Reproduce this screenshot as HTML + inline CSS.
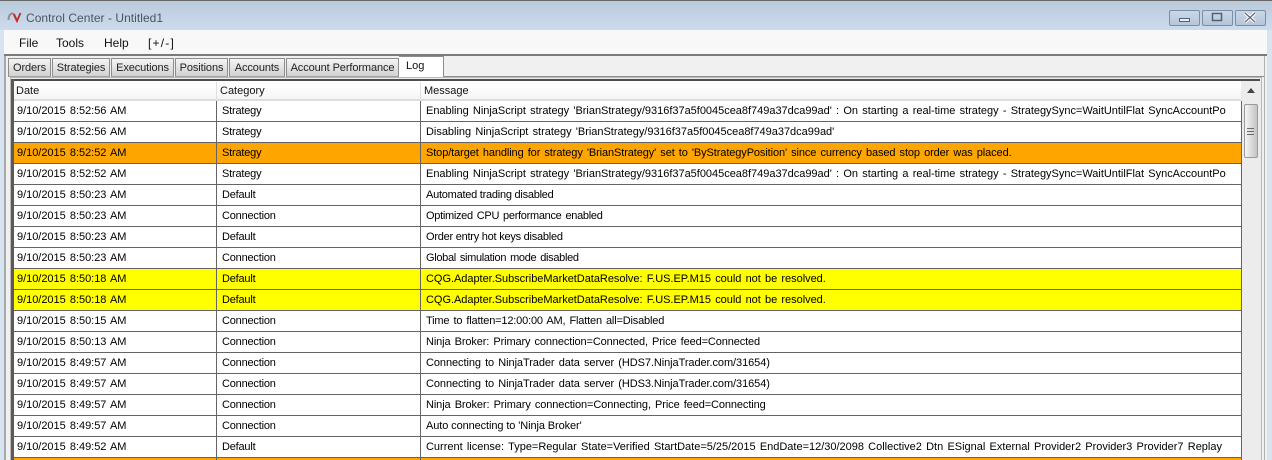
<!DOCTYPE html>
<html><head><meta charset="utf-8">
<style>
html,body{margin:0;padding:0}
body{width:1272px;height:460px;overflow:hidden;position:relative;font-family:"Liberation Sans",sans-serif;font-size:11px;color:#111;background:#d6e3f1}
div{position:absolute;white-space:pre;box-sizing:border-box}
#title{left:0;top:0;width:1272px;height:30px;background:linear-gradient(#b9cadb,#cddcec);border-top:1px solid #666}
.wb{top:10px;height:16px;width:31px;border:1px solid #7d8ea3;border-radius:2px;background:linear-gradient(#c8d8e8,#b4c6da)}
#client{left:4px;top:30px;width:1263px;height:430px;background:#f0f0f0}
#menu{left:4px;top:30px;width:1263px;height:24px;background:#f8f8f8}
.m{top:36px;font-size:12px;color:#111}
.tab{top:58px;height:19px;background:linear-gradient(#f4f4f4,#d2d2d2);border:1px solid #8c8c8c;border-bottom:1px solid #a0a0a0;text-align:center;line-height:18px;font-size:11px;letter-spacing:-.1px;color:#222}
.r{left:14px;width:1227px;height:21px;border-bottom:1px solid #646464;background:#fff}
.r div{top:3px;line-height:14px;color:#000;word-spacing:1.2px;letter-spacing:-.03px}
.a{left:3px}.c{left:412px}
.r div.b{left:208px;letter-spacing:-.2px}
.o{background:#ffa500}.y{background:#ff0}
.v{top:80px;width:1px;height:380px;background:#646464}
.h{top:85px;color:#111}
</style></head><body>
<div id="title"></div>
<svg style="position:absolute;left:7px;top:11px" width="15" height="12" viewBox="0 0 15 12"><path d="M1.5 9C1.5 3 6 0 7.5 5L10 10" fill="none" stroke="#8f8f8f" stroke-width="2"/><path d="M7 3L10 10L13.5 2" fill="none" stroke="#c22a2a" stroke-width="1.8"/></svg>
<div style="left:26px;top:11px;font-size:12px;color:#4a5560;letter-spacing:.04px">Control Center - Untitled1</div>
<div class="wb" style="left:1169px"><svg width="29" height="14" style="position:absolute;left:0;top:0"><rect x="9.5" y="7.5" width="10" height="3" fill="#e8eef5" stroke="#556070"/></svg></div>
<div class="wb" style="left:1202px"><svg width="29" height="14" style="position:absolute;left:0;top:0"><rect x="9.5" y="2.5" width="9" height="7" fill="none" stroke="#556070" stroke-width="1.5"/></svg></div>
<div class="wb" style="left:1235px"><svg width="29" height="14" style="position:absolute;left:0;top:0"><path d="M9 2L19 11M19 2L9 11" stroke="#fff" stroke-width="3.4"/><path d="M9 2L19 11M19 2L9 11" stroke="#667" stroke-width="1.2"/></svg></div>
<div id="client"></div>
<div id="menu"></div>
<div style="left:4px;top:54px;width:1263px;height:2px;background:#7a7a7a"></div>
<div style="left:4px;top:56px;width:2px;height:404px;background:#a8a8a8"></div>
<div style="left:1264px;top:56px;width:1px;height:404px;background:#b0b0b0"></div>
<div class="m" style="left:19px">File</div>
<div class="m" style="left:56px">Tools</div>
<div class="m" style="left:104px">Help</div>
<div class="m" style="left:148px;letter-spacing:1.2px">[+/-]</div>
<div class="tab" style="left:8px;width:43px">Orders</div>
<div class="tab" style="left:52px;width:58px">Strategies</div>
<div class="tab" style="left:111px;width:63px">Executions</div>
<div class="tab" style="left:175px;width:53px">Positions</div>
<div class="tab" style="left:229px;width:56px">Accounts</div>
<div class="tab" style="left:286px;width:113px">Account Performance</div>
<div style="left:399px;top:56px;width:45px;height:21px;background:#fff;border:1px solid #8c8c8c;border-bottom:0;border-left:0;padding:3px 0 0 7px;font-size:11px">Log</div>
<div style="left:444px;top:76px;width:820px;height:1px;background:#8c8c8c"></div>
<div style="left:10px;top:77px;width:1252px;height:383px;background:#ececec;border:1px solid #b8b8b8;border-bottom:0"></div>
<div style="left:12px;top:79px;width:1248px;height:2px;background:#4e4e4e"></div>
<div style="left:11px;top:79px;width:3px;height:381px;background:#5a5a5a"></div>
<div style="left:14px;top:81px;width:1227px;height:20px;background:linear-gradient(#fff,#fff 30%,#f2f4f6);border-bottom:2px solid #dcdcdc"></div>
<div class="h" style="left:16px">Date</div>
<div class="h" style="left:220px">Category</div>
<div class="h" style="left:424px">Message</div>
<div class="r" style="top:101px"><div class="a">9/10/2015 8:52:56 AM</div><div class="b">Strategy</div><div class="c" style="letter-spacing:-.017px">Enabling NinjaScript strategy 'BrianStrategy/9316f37a5f0045cea8f749a37dca99ad' : On starting a real-time strategy - StrategySync=WaitUntilFlat SyncAccountPo</div></div>
<div class="r" style="top:122px"><div class="a">9/10/2015 8:52:56 AM</div><div class="b">Strategy</div><div class="c" style="letter-spacing:-.017px">Disabling NinjaScript strategy 'BrianStrategy/9316f37a5f0045cea8f749a37dca99ad'</div></div>
<div class="r o" style="top:143px"><div class="a">9/10/2015 8:52:52 AM</div><div class="b">Strategy</div><div class="c" style="letter-spacing:-.104px">Stop/target handling for strategy 'BrianStrategy' set to 'ByStrategyPosition' since currency based stop order was placed.</div></div>
<div class="r" style="top:164px"><div class="a">9/10/2015 8:52:52 AM</div><div class="b">Strategy</div><div class="c" style="letter-spacing:-.017px">Enabling NinjaScript strategy 'BrianStrategy/9316f37a5f0045cea8f749a37dca99ad' : On starting a real-time strategy - StrategySync=WaitUntilFlat SyncAccountPo</div></div>
<div class="r" style="top:185px"><div class="a">9/10/2015 8:50:23 AM</div><div class="b">Default</div><div class="c" style="letter-spacing:-.245px;word-spacing:0">Automated trading disabled</div></div>
<div class="r" style="top:206px"><div class="a">9/10/2015 8:50:23 AM</div><div class="b">Connection</div><div class="c" style="letter-spacing:-.3px">Optimized CPU performance enabled</div></div>
<div class="r" style="top:227px"><div class="a">9/10/2015 8:50:23 AM</div><div class="b">Default</div><div class="c" style="letter-spacing:-.24px;word-spacing:0">Order entry hot keys disabled</div></div>
<div class="r" style="top:248px"><div class="a">9/10/2015 8:50:23 AM</div><div class="b">Connection</div><div class="c" style="letter-spacing:-.32px">Global simulation mode disabled</div></div>
<div class="r y" style="top:269px"><div class="a">9/10/2015 8:50:18 AM</div><div class="b">Default</div><div class="c">CQG.Adapter.SubscribeMarketDataResolve: F.US.EP.M15 could not be resolved.</div></div>
<div class="r y" style="top:290px"><div class="a">9/10/2015 8:50:18 AM</div><div class="b">Default</div><div class="c">CQG.Adapter.SubscribeMarketDataResolve: F.US.EP.M15 could not be resolved.</div></div>
<div class="r" style="top:311px"><div class="a">9/10/2015 8:50:15 AM</div><div class="b">Connection</div><div class="c" style="letter-spacing:-.17px">Time to flatten=12:00:00 AM, Flatten all=Disabled</div></div>
<div class="r" style="top:332px"><div class="a">9/10/2015 8:50:13 AM</div><div class="b">Connection</div><div class="c" style="letter-spacing:-.12px">Ninja Broker: Primary connection=Connected, Price feed=Connected</div></div>
<div class="r" style="top:353px"><div class="a">9/10/2015 8:49:57 AM</div><div class="b">Connection</div><div class="c" style="letter-spacing:-.075px">Connecting to NinjaTrader data server (HDS7.NinjaTrader.com/31654)</div></div>
<div class="r" style="top:374px"><div class="a">9/10/2015 8:49:57 AM</div><div class="b">Connection</div><div class="c" style="letter-spacing:-.075px">Connecting to NinjaTrader data server (HDS3.NinjaTrader.com/31654)</div></div>
<div class="r" style="top:395px"><div class="a">9/10/2015 8:49:57 AM</div><div class="b">Connection</div><div class="c" style="letter-spacing:-.105px">Ninja Broker: Primary connection=Connecting, Price feed=Connecting</div></div>
<div class="r" style="top:416px"><div class="a">9/10/2015 8:49:57 AM</div><div class="b">Connection</div><div class="c" style="letter-spacing:-.1px;word-spacing:0">Auto connecting to 'Ninja Broker'</div></div>
<div class="r" style="top:437px"><div class="a">9/10/2015 8:49:52 AM</div><div class="b">Default</div><div class="c" style="letter-spacing:-.01px">Current license: Type=Regular State=Verified StartDate=5/25/2015 EndDate=12/30/2098 Collective2 Dtn ESignal External Provider2 Provider3 Provider7 Replay</div></div>
<div class="r o" style="top:458px;height:2px;border:0"></div>
<div class="v" style="left:216px;top:101px;height:359px"></div>
<div class="v" style="left:420px;top:101px;height:359px"></div>
<div class="v" style="left:1241px;top:101px;height:359px;width:1px"></div>
<div style="left:216px;top:82px;width:1px;height:18px;background:#e0e0e0"></div>
<div style="left:420px;top:82px;width:1px;height:18px;background:#e0e0e0"></div>
<svg style="position:absolute;left:1247px;top:88px" width="8" height="5"><path d="M0 5L4 0L8 5Z" fill="#444"/></svg>
<div style="left:1244px;top:104px;width:14px;height:54px;border:1px solid #9a9a9a;border-radius:2px;background:linear-gradient(90deg,#f5f5f5,#dadada 55%,#c4c4c4)"></div>
<svg style="position:absolute;left:1246px;top:127px" width="10" height="9"><path d="M1 1.5H8M1 4.5H8M1 7.5H8" stroke="#6b6b6b" stroke-width="1"/></svg>
</body></html>
